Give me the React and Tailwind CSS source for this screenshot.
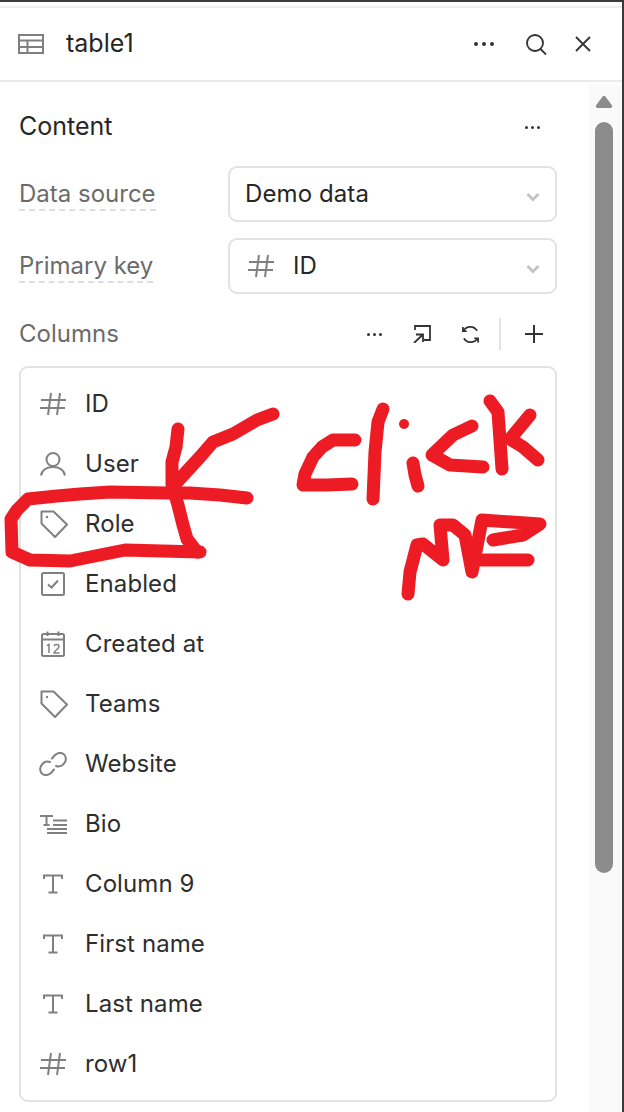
const font = { fontFamily: 'Inter, "Noto Sans", sans-serif' };

function Hash() {
  return (
    <svg width="26" height="24" viewBox="0 0 26 24" fill="none" stroke="#808080" strokeWidth="2">
      <path d="M1 8H26M0 16H25M11 1L8 23M20 1L17 23" />
    </svg>
  );
}

function UserIcon() {
  return (
    <svg width="26" height="24" viewBox="0 0 26 24" fill="none" stroke="#808080" strokeWidth="2">
      <circle cx="13" cy="7.500" r="6.500" />
      <path d="M1 23.500C2 18 7 15 13 15C19 15 24 18 25 23.500" />
    </svg>
  );
}

function TagIcon() {
  return (
    <svg width="28" height="28" viewBox="0 0 28 28" fill="none" stroke="#808080" strokeWidth="2" className="ml-[2px]">
      <path d="M1.500 1.500H13.500L27 14.500L15 27L1.500 13.500Z" strokeLinejoin="round" />
      <circle cx="7" cy="7" r="1.200" fill="#808080" stroke="none" />
    </svg>
  );
}

function CheckIcon() {
  return (
    <svg width="24" height="24" viewBox="0 0 24 24" fill="none" stroke="#808080" strokeWidth="2">
      <rect x="1" y="1" width="22" height="22" rx="1.500" />
      <path d="M7 12.500L10.500 15.500L17 8.500" />
    </svg>
  );
}

function CalendarIcon() {
  return (
    <svg width="24" height="26" viewBox="0 0 24 26" fill="none" stroke="#808080" strokeWidth="2">
      <rect x="1" y="3" width="22" height="22" rx="1.500" />
      <path d="M1 8.500H23M6.500 0.500V5M17.500 0.500V5" />
      <path d="M6 14.500L8 13.500V22M13 15C13.500 13 18 13 18 15.500C18 18 13.500 19 13 22H18.500" strokeWidth="1.500" />
    </svg>
  );
}

function LinkIcon() {
  return (
    <svg width="28" height="24" viewBox="0 0 28 24" fill="none" stroke="#808080" strokeWidth="2" strokeLinecap="round">
      <path d="M11 10C8 9 5 10 3 12.500C0 16 1 20 3.500 22C6 24 10 23 12.500 20.500L15 17.500" />
      <path d="M17 14C20 15 23 14 25 11.500C28 8 27 4 24.500 2C22 0 18 1 15.500 3.500L13 6.500" />
    </svg>
  );
}

function BioIcon() {
  return (
    <svg width="27" height="20" viewBox="0 0 27 20" fill="none" stroke="#808080" strokeWidth="2">
      <path d="M0 2H13M6.500 2V11M3.500 11H9.500M13 6.500H27M13 11H27M7 15H27M7 19H27" />
    </svg>
  );
}

function TextIcon() {
  return (
    <svg width="20" height="20" viewBox="0 0 20 20" fill="none" stroke="#808080" strokeWidth="2">
      <path d="M1 5V1.500H19V5M10 1.500V18.500M5.500 18.500H14.500" />
    </svg>
  );
}

function TableIcon() {
  return (
    <svg width="26" height="20" viewBox="0 0 26 20" fill="none" stroke="#808080" strokeWidth="2">
      <rect x="1" y="1" width="24" height="18" />
      <path d="M1 6.500H25M1 13H25M9.500 6.500V19" />
    </svg>
  );
}

function Dots({ size = 3 }) {
  const dot = size === 3 ? 'w-[3px] h-[3px] rounded-full bg-[#333333]' : 'w-1 h-1 rounded-full bg-[#333333]';
  return (
    <div className={size === 3 ? 'flex gap-[3px]' : 'flex gap-[4px]'}>
      <div className={dot} />
      <div className={dot} />
      <div className={dot} />
    </div>
  );
}

function Chevron() {
  return (
    <svg width="14" height="10" viewBox="0 0 14 10" fill="none" stroke="#c4c4c4" strokeWidth="3">
      <path d="M1.500 2L7 7.500L12.500 2" />
    </svg>
  );
}

function Field({ label, children }) {
  return (
    <div className="flex items-center justify-between h-14">
      <span className="mt-[2px] text-[24px] leading-[30px] text-[#6b6b6b] border-b-2 border-dashed border-[#dedede]">{label}</span>
      <div className="w-[329px] h-14 border-2 border-[#e2e2e2] rounded-[9px] flex items-center pl-[15px] pr-[15px] text-[24px] tracking-[0.1px] text-[#262626]">
        {children}
        <div className="ml-auto mt-[6px]"><Chevron /></div>
      </div>
    </div>
  );
}

const columns = [
  ['ID', Hash],
  ['User', UserIcon],
  ['Role', TagIcon],
  ['Enabled', CheckIcon],
  ['Created at', CalendarIcon],
  ['Teams', TagIcon],
  ['Website', LinkIcon],
  ['Bio', BioIcon],
  ['Column 9', TextIcon],
  ['First name', TextIcon],
  ['Last name', TextIcon],
  ['row1', Hash],
];

// hand-drawn annotation on top of the panel
function Scribble() {
  return (
    <svg className="absolute left-0 top-0 pointer-events-none" width="624" height="1112" fill="none" stroke="#ed1c24" strokeWidth="13" strokeLinecap="round" strokeLinejoin="round">
      <path d="M178 427L176 445L172 460L172 483L178 503L183 523L187 537L197 550" />
      <path d="M273 412L257 418L233 432L213 440L200 455L177 480" />
      <path d="M247 496L220 493L190 491L167 491L110 490L80 492L57 494L28 497L17 508L11 517L12 550L30 558L70 559L100 553L125 548L200 550" />
      <path d="M355 438L333 438L322 445L313 455L305 472L303 483L327 483L352 482" />
      <path d="M383 407L378 420L375 450L373 497" />
      <path d="M413 461L415 473L418 484" />
      <circle cx="404" cy="422" r="5" fill="#ed1c24" stroke="none" />
      <path d="M472 424L453 433L432 453L450 463L483 465" />
      <path d="M490 399L498 410L502 467" />
      <path d="M530 413L510 437L523 445L538 458" />
      <path d="M408 592L410 570L417 543L423 542L443 558L440 523L453 523L465 533L472 570L482 518L540 522L523 533L493 538" />
      <path d="M472 558L528 558" />
    </svg>
  );
}

export default function App() {
  return (
    <div className="relative w-[624px] h-[1112px] bg-white overflow-hidden flex flex-col border-t-2 border-r-2 border-[#3a3a3a]" style={font}>
      <div className="h-[4px] shrink-0" />
      <div className="h-[2px] shrink-0 bg-[#eeeeee]" />

      <div className="h-[74px] shrink-0 flex items-center pl-[18px] border-b-2 border-[#eaeaea] text-[#262626]">
        <TableIcon />
        <span className="ml-[22px] text-[25px]">table1</span>
        <div className="ml-auto flex items-center">
          <Dots size={4} />
          <svg className="ml-[32px]" width="21" height="21" viewBox="0 0 21 21" fill="none" stroke="#333333" strokeWidth="1.800">
            <circle cx="9" cy="9" r="8" />
            <path d="M14.500 15L20 20.500" />
          </svg>
          <svg className="ml-[28px] mr-[31px]" width="16" height="16" viewBox="0 0 16 16" fill="none" stroke="#333333" strokeWidth="1.800">
            <path d="M1 1L15 15M15 1L1 15" />
          </svg>
        </div>
      </div>

      <div className="flex-1 flex min-h-0">
        <div className="flex-1 pl-[19px] pr-[32px]">
          <div className="h-[28px] mt-[31px] flex items-center justify-between text-[25px] text-[#262626]">
            <span>Content</span>
            <div className="mr-[17px]"><Dots /></div>
          </div>

          <div className="mt-[25px] flex flex-col gap-4">
            <Field label="Data source">
              <span>Demo data</span>
            </Field>
            <Field label="Primary key">
              <div className="ml-[3px]"><Hash /></div>
              <span className="ml-[19px]">ID</span>
            </Field>
          </div>

          <div className="mt-[20px] h-[40px] flex items-center text-[24px] text-[#6b6b6b]">
            <span>Columns</span>
            <div className="ml-auto flex items-center">
              <Dots />
              <svg className="ml-[31px]" width="18" height="18" viewBox="0 0 18 18" fill="none" stroke="#333333" strokeWidth="1.800">
                <path d="M2 5V1H17V15H11M1 18L10 9.500M3 9.500H10V17" />
              </svg>
              <svg className="ml-[30px]" width="19" height="19" viewBox="0 0 20 20" fill="none" stroke="#333333" strokeWidth="1.800">
                <path d="M17 6C15 3 12 1.500 9 2C6 2.500 3.500 4 2.500 6M2 2V6.500H6M3 14C5 17 8 18.500 11 18C14 17.500 16.500 16 17.500 14M18 18.500V14H14" />
              </svg>
              <div className="ml-[19px] w-[2px] h-8 bg-[#e2e2e2]" />
              <svg className="ml-[23px] mr-[13px]" width="20" height="20" viewBox="0 0 20 20" fill="none" stroke="#333333" strokeWidth="2">
                <path d="M10 1V19M1 10H19" />
              </svg>
            </div>
          </div>

          <div className="mt-[12px] h-[736px] border-2 border-[#e2e2e2] rounded-[9px] pt-[6px]">
            {columns.map(([name, Icon]) => (
              <div key={name} className="h-[60px] flex items-center text-[24px] tracking-[0.1px] text-[#2e2e2e]">
                <div className="w-[64px] shrink-0 flex justify-center"><Icon /></div>
                <span>{name}</span>
              </div>
            ))}
          </div>
        </div>

        <div className="w-[33px] shrink-0 bg-[#fafafa] mt-[3px] flex flex-col pl-[6px]">
          <svg className="mt-[10px]" width="18" height="13" viewBox="0 0 18 14" fill="#8c8c8c">
            <path d="M7.500 1.500C8.300 0.500 9.700 0.500 10.500 1.500L17.500 11C18.300 12.200 17.500 14 16 14H2C0.500 14 -0.300 12.200 0.500 11Z" />
          </svg>
          <div className="mt-[14px] w-[18px] h-[751px] rounded-full bg-[#8c8c8c]" />
        </div>
      </div>

      <Scribble />
    </div>
  );
}
